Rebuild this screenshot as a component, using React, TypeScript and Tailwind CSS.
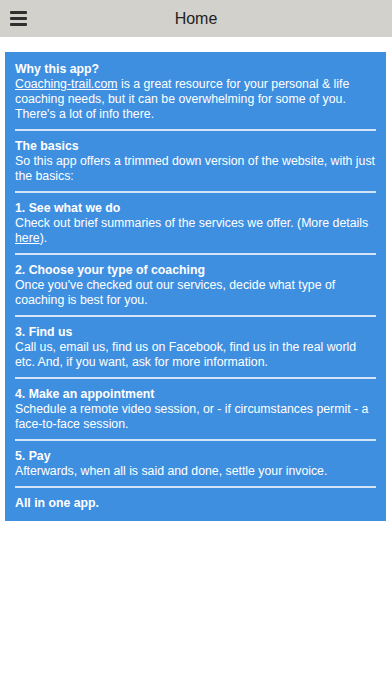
import React from 'react';

type Section = {
  title: string;
  body?: React.ReactNode;
};

const SECTIONS: Section[] = [
  {
    title: 'Why this app?',
    body: (
      <>
        <span className="underline">Coaching-trail.com</span> is a great resource for your personal &amp; life
        coaching needs, but it can be overwhelming for some of you. There's a lot of info there.
      </>
    ),
  },
  {
    title: 'The basics',
    body: 'So this app offers a trimmed down version of the website, with just the basics:',
  },
  {
    title: '1. See what we do',
    body: (
      <>
        Check out brief summaries of the services we offer. (More details{' '}
        <span className="underline">here</span>).
      </>
    ),
  },
  {
    title: '2. Choose your type of coaching',
    body: "Once you've checked out our services, decide what type of coaching is best for you.",
  },
  {
    title: '3. Find us',
    body: 'Call us, email us, find us on Facebook, find us in the real world etc. And, if you want, ask for more information.',
  },
  {
    title: '4. Make an appointment',
    body: 'Schedule a remote video session, or - if circumstances permit - a face-to-face session.',
  },
  {
    title: '5. Pay',
    body: 'Afterwards, when all is said and done, settle your invoice.',
  },
  {
    title: 'All in one app.',
  },
];

export default function App() {
  return (
    <div className="min-h-[696px] bg-white font-['Liberation_Sans',Arial,sans-serif]">
      {/* Top bar */}
      <header className="relative flex h-[37px] items-center justify-center bg-[#d3d1cc]">
        <button type="button" className="absolute left-[10px] top-[11px] flex w-[17px] flex-col gap-[3px]">
          <span className="h-[3px] w-full rounded-[1px] bg-[#2f2f2f]" />
          <span className="h-[3px] w-full rounded-[1px] bg-[#2f2f2f]" />
          <span className="h-[3px] w-full rounded-[1px] bg-[#2f2f2f]" />
        </button>
        <h1 className="text-[16px] text-[#222]">Home</h1>
      </header>

      {/* Content card */}
      <main className="px-[5px] pt-[15px]">
        <div className="w-[381px] bg-[#3f8fe1] px-[10px] pb-[10px] pt-[10px] text-[12.3px] leading-[15px] text-white">
          {SECTIONS.map((section, i) => (
            <div key={section.title}>
              {i > 0 && <div className="mb-[8px] mt-[7px] h-[2px] bg-[#d4e5f8]" />}
              <div className="font-bold">{section.title}</div>
              {section.body && <div>{section.body}</div>}
            </div>
          ))}
        </div>
      </main>
    </div>
  );
}
